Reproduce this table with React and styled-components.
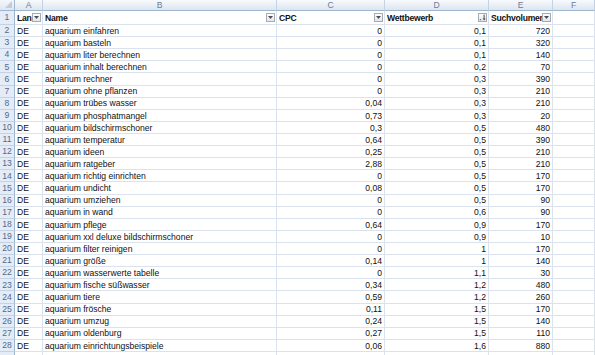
import React from "react";
import styled, { createGlobalStyle } from "styled-components";

const Global = createGlobalStyle`
  html, body { margin: 0; padding: 0; background: #fff; }
  body { font-family: "Liberation Sans", Arial, sans-serif; overflow: hidden; }
`;

const COLS = "15px 28px 234px 108px 104px 64px 42px";

const Sheet = styled.div`
  display: grid;
  grid-template-columns: ${COLS};
  grid-auto-rows: 12.11px;
  grid-template-rows: 11px 14px;
  width: 595px;
  height: 355px;
  overflow: hidden;
  font-size: 8.6px;
  color: #111;
`;

const Corner = styled.div`
  position: relative;
  background: linear-gradient(#f4f7fb, #dfe6f0);
  border-right: 1px solid #9eb6ce;
  border-bottom: 1px solid #9eb6ce;
  box-sizing: border-box;
  &::after {
    content: "";
    position: absolute;
    right: 2px;
    bottom: 2px;
    border-style: solid;
    border-width: 0 0 7px 7px;
    border-color: transparent transparent #c3cdda transparent;
  }
`;

const ColHead = styled.div`
  background: linear-gradient(#f8fafd, #dde5f0);
  border-right: 1px solid #c5d2e3;
  border-bottom: 1px solid #9eb6ce;
  box-sizing: border-box;
  color: #6a7c96;
  font-size: 8.6px;
  display: flex;
  align-items: center;
  justify-content: center;
  line-height: 1;
`;

const RowHead = styled.div`
  background: #e4ecf7;
  border-right: 1px solid #9eb6ce;
  border-bottom: 1px solid #c5d2e3;
  box-sizing: border-box;
  color: #55698a;
  font-size: 8.6px;
  display: flex;
  align-items: center;
  justify-content: center;
  line-height: 1;
`;

const Cell = styled.div`
  position: relative;
  border-right: 1px solid #dae2ed;
  border-bottom: 1px solid #dae2ed;
  box-sizing: border-box;
  display: flex;
  align-items: center;
  justify-content: ${(p) => (p.$num ? "flex-end" : "flex-start")};
  padding: 1px 2px 0 2px;
  white-space: nowrap;
  overflow: hidden;
  font-weight: ${(p) => (p.$bold ? 700 : 400)};
  letter-spacing: ${(p) => (p.$bold ? "-0.25px" : "0")};
  line-height: 1;
`;

const FilterBtn = styled.span`
  position: absolute;
  right: 1px;
  top: 2px;
  width: 9px;
  height: 9px;
  box-sizing: border-box;
  border: 1px solid #a7acb3;
  background: linear-gradient(#fdfdfd, #e3e6ea);
  display: flex;
  align-items: center;
  justify-content: center;
`;

const Tri = () => (
  <svg width="5" height="3" viewBox="0 0 5 3">
    <path d="M0 0 H5 L2.5 3 Z" fill="#4a4f57" />
  </svg>
);

const SortIcon = () => (
  <svg width="7" height="7" viewBox="0 0 7 7">
    <path d="M0.5 5.2 H2.5 L1.5 6.5 Z" fill="#4a4f57" />
    <rect x="4.6" y="0.5" width="1" height="4.5" fill="#4a4f57" />
    <path d="M3.6 4.5 H6.6 L5.1 6.6 Z" fill="#4a4f57" />
  </svg>
);

const Filter = ({ sorted }) => (
  <FilterBtn>{sorted ? <SortIcon /> : <Tri />}</FilterBtn>
);

const data = [
  ["aquarium einfahren", "0", "0,1", "720"],
  ["aquarium basteln", "0", "0,1", "320"],
  ["aquarium liter berechnen", "0", "0,1", "140"],
  ["aquarium inhalt berechnen", "0", "0,2", "70"],
  ["aquarium rechner", "0", "0,3", "390"],
  ["aquarium ohne pflanzen", "0", "0,3", "210"],
  ["aquarium trübes wasser", "0,04", "0,3", "210"],
  ["aquarium phosphatmangel", "0,73", "0,3", "20"],
  ["aquarium bildschirmschoner", "0,3", "0,5", "480"],
  ["aquarium temperatur", "0,64", "0,5", "390"],
  ["aquarium ideen", "0,25", "0,5", "210"],
  ["aquarium ratgeber", "2,88", "0,5", "210"],
  ["aquarium richtig einrichten", "0", "0,5", "170"],
  ["aquarium undicht", "0,08", "0,5", "170"],
  ["aquarium umziehen", "0", "0,5", "90"],
  ["aquarium in wand", "0", "0,6", "90"],
  ["aquarium pflege", "0,64", "0,9", "170"],
  ["aquarium xxl deluxe bildschirmschoner", "0", "0,9", "10"],
  ["aquarium filter reinigen", "0", "1", "170"],
  ["aquarium größe", "0,14", "1", "140"],
  ["aquarium wasserwerte tabelle", "0", "1,1", "30"],
  ["aquarium fische süßwasser", "0,34", "1,2", "480"],
  ["aquarium tiere", "0,59", "1,2", "260"],
  ["aquarium frösche", "0,11", "1,5", "170"],
  ["aquarium umzug", "0,24", "1,5", "140"],
  ["aquarium oldenburg", "0,27", "1,5", "110"],
  ["aquarium einrichtungsbeispiele", "0,06", "1,6", "880"],
];

export default function App() {
  return (
    <>
      <Global />
      <Sheet>
        <Corner />
        {["A", "B", "C", "D", "E", "F"].map((c) => (
          <ColHead key={c}>{c}</ColHead>
        ))}

        <RowHead>1</RowHead>
        <Cell $bold>
          Lan
          <Filter />
        </Cell>
        <Cell $bold>
          Name
          <Filter />
        </Cell>
        <Cell $bold>
          CPC
          <Filter />
        </Cell>
        <Cell $bold>
          Wettbewerb
          <Filter sorted />
        </Cell>
        <Cell $bold>
          Suchvolumen
          <Filter />
        </Cell>
        <Cell />

        {data.map((r, i) => (
          <React.Fragment key={i}>
            <RowHead>{i + 2}</RowHead>
            <Cell>DE</Cell>
            <Cell>{r[0]}</Cell>
            <Cell $num>{r[1]}</Cell>
            <Cell $num>{r[2]}</Cell>
            <Cell $num>{r[3]}</Cell>
            <Cell />
          </React.Fragment>
        ))}
        <RowHead />
        <Cell />
        <Cell />
        <Cell />
        <Cell />
        <Cell />
        <Cell />
      </Sheet>
    </>
  );
}
